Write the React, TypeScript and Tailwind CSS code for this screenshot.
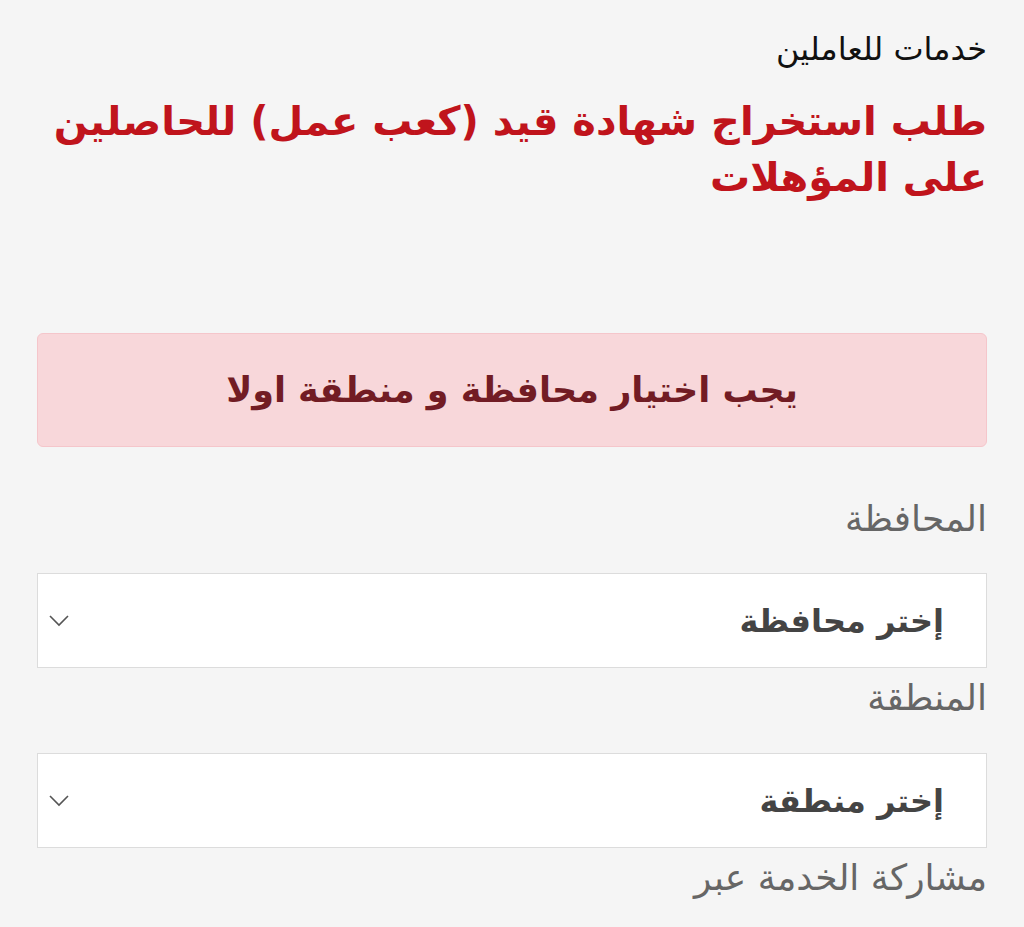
import React from "react";

function Chevron() {
  return (
    <svg width="22" height="14" viewBox="0 0 22 14" fill="none" className="text-[#555]">
      <path d="M2 2 L11 11 L20 2" stroke="currentColor" strokeWidth="1.6" />
    </svg>
  );
}

function SelectBox({ text }: { text: string }) {
  return (
    <div className="flex h-[95px] items-center justify-between border border-[#dcdcdc] bg-white pr-[42px] pl-[10px]">
      <span className="text-[32px] font-bold leading-[40px] text-[#444]">{text}</span>
      <Chevron />
    </div>
  );
}

export default function App() {
  return (
    <div
      dir="rtl"
      className="min-h-[927px] w-[1024px] bg-[#f5f5f5] px-[37px] pt-[25px]"
      style={{ fontFamily: '"DejaVu Sans", "Noto Sans", sans-serif' }}
    >
      <div className="text-[32px] font-medium leading-[48px] text-[#111]">خدمات للعاملين</div>
      <h1 className="mt-[20px] text-[40px] font-bold leading-[56px] text-[#c0141c]">
        طلب استخراج شهادة قيد (كعب عمل) للحاصلين على المؤهلات
      </h1>
      <div className="mt-[128px] flex h-[114px] items-center justify-center rounded-[6px] border border-[#f5c6cb] bg-[#f8d7da]">
        <span className="text-[35px] font-bold leading-[44px] text-[#721c24]">يجب اختيار محافظة و منطقة اولا</span>
      </div>
      <div className="mt-[48px] text-[36px] leading-[48px] text-[#666]">المحافظة</div>
      <div className="mt-[30px]">
        <SelectBox text="إختر محافظة" />
      </div>
      <div className="text-[36px] leading-[60px] text-[#666]">المنطقة</div>
      <div className="mt-[25px]">
        <SelectBox text="إختر منطقة" />
      </div>
      <div className="text-[36px] leading-[60px] text-[#666]">مشاركة الخدمة عبر</div>
    </div>
  );
}
